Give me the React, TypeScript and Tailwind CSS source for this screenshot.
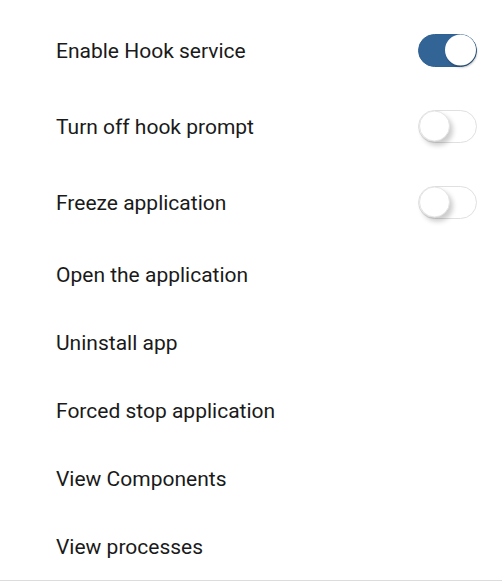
import React, { useState } from 'react';

interface ToggleProps {
    checked: boolean;
    onChange: (v: boolean) => void;
}

const Toggle: React.FC<ToggleProps> = ({ checked, onChange }) => (
    <button
        type="button"
        onClick={() => onChange(!checked)}
        className={`relative h-[33px] w-[59px] rounded-full border transition-colors ${
            checked ? 'border-[#2f6194] bg-[#326496]' : 'border-[#e0e0e0] bg-white'
        }`}
    >
        <span
            className={`absolute top-1/2 h-[31px] w-[31px] -translate-y-1/2 rounded-full bg-white transition-all ${
                checked
                    ? 'right-[0px] shadow-[1px_2px_2px_rgba(0,0,0,0.25)]'
                    : 'left-[0px] border border-[#e4e4e4] shadow-[3px_4px_5px_rgba(0,0,0,0.2)]'
            }`}
        />
    </button>
);

const ACTIONS = [
    'Open the application',
    'Uninstall app',
    'Forced stop application',
    'View Components',
    'View processes'
];

export default function App() {
    const [hook, setHook] = useState(true);
    const [prompt, setPrompt] = useState(false);
    const [freeze, setFreeze] = useState(false);

    const switches = [
        { label: 'Enable Hook service', value: hook, set: setHook },
        { label: 'Turn off hook prompt', value: prompt, set: setPrompt },
        { label: 'Freeze application', value: freeze, set: setFreeze }
    ];

    return (
        <div className="h-[583px] w-[502px] bg-white font-['Roboto',sans-serif] text-[21px] text-[#1a1a1a]">
            <div className="border-b border-[#dcdcdc] pt-[12px]">
                {switches.map(s => (
                    <div key={s.label} className="flex h-[76px] items-center justify-between pl-[56px] pr-[25px]">
                        <span className="pt-[4px]">{s.label}</span>
                        <Toggle checked={s.value} onChange={s.set} />
                    </div>
                ))}
                {ACTIONS.map(a => (
                    <div key={a} className="flex h-[68px] items-center pl-[56px]">
                        <span className="pt-[4px]">{a}</span>
                    </div>
                ))}
            </div>
        </div>
    );
}
